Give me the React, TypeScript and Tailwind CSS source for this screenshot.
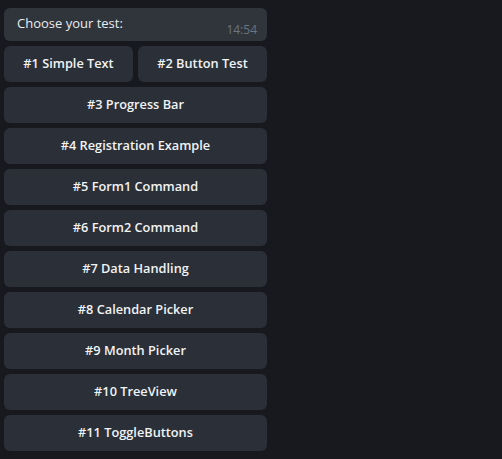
export default function App() {
  const rows: string[][] = [
    ["#1 Simple Text", "#2 Button Test"],
    ["#3 Progress Bar"],
    ["#4 Registration Example"],
    ["#5 Form1 Command"],
    ["#6 Form2 Command"],
    ["#7 Data Handling"],
    ["#8 Calendar Picker"],
    ["#9 Month Picker"],
    ["#10 TreeView"],
    ["#11 ToggleButtons"],
  ];
  return (
    <div
      className="w-[502px] h-[459px] bg-[#17191e] overflow-hidden"
      style={{ fontFamily: '"Open Sans", sans-serif' }}
    >
      <div className="pt-[8px] pl-[4px] w-[267px] flex flex-col gap-[5px]">
        <div className="h-[33px] rounded-[6px] bg-[#30343b] flex items-start justify-between pl-[13px] pr-[10px]">
          <span className="text-[13px] text-[#e9ecef] leading-[18px] mt-[6px]">Choose your test:</span>
          <span className="text-[12px] text-[#6c7580] leading-[16px] mt-[14px]">14:54</span>
        </div>
        {rows.map((r, i) => (
          <div key={i} className="flex gap-[5px]">
            {r.map((t) => (
              <div
                key={t}
                className="flex-1 h-[36px] rounded-[6px] bg-[#2b2f37] flex items-center justify-center text-[12.75px] font-semibold text-[#f1f3f5]"
              >
                {t}
              </div>
            ))}
          </div>
        ))}
      </div>
    </div>
  );
}
